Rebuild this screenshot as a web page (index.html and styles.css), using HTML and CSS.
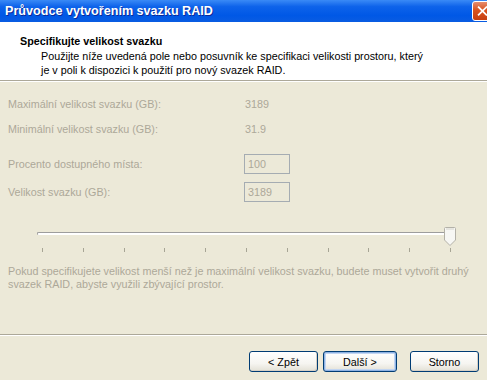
FILE: index.html
```html
<!DOCTYPE html>
<html lang="cs">
<head>
    <meta charset="UTF-8">
    <title>Průvodce vytvořením svazku RAID</title>
    <link rel="stylesheet" href="styles.css">
</head>
<body>
    <div class="window">
        <div class="titlebar">
            <span class="title">Průvodce vytvořením svazku RAID</span>
            <div class="close">
                <svg width="21" height="21" viewBox="0 0 21 21">
                    <path d="M6 6 L15 15 M15 6 L6 15" stroke="#fff" stroke-width="2" stroke-linecap="square"/>
                </svg>
            </div>
        </div>

        <div class="header">
            <div class="header-title">Specifikujte velikost svazku</div>
            <div class="header-desc">
                Použijte níže uvedená pole nebo posuvník ke specifikaci velikosti prostoru, který<br>
                je v poli k dispozici k použití pro nový svazek RAID.
            </div>
        </div>

        <div class="content">
            <div class="row">
                <span class="label">Maximální velikost svazku (GB):</span>
                <span class="value">3189</span>
            </div>
            <div class="row">
                <span class="label">Minimální velikost svazku (GB):</span>
                <span class="value">31.9</span>
            </div>
            <div class="row row-input">
                <span class="label">Procento dostupného místa:</span>
                <span class="field">100</span>
            </div>
            <div class="row row-input">
                <span class="label">Velikost svazku (GB):</span>
                <span class="field">3189</span>
            </div>

            <div class="slider">
                <div class="track"></div>
                <svg class="thumb" width="12" height="19" viewBox="0 0 12 19">
                    <path d="M1.5 0.5 H10.5 Q11.5 0.5 11.5 1.5 V13 L6 18.5 L0.5 13 V1.5 Q0.5 0.5 1.5 0.5 Z" fill="#f7f7f4" stroke="#b3b1a8"/>
                    <path d="M2 2 H10" stroke="#d6d4cc"/>
                </svg>
                <div class="ticks">
                    <i></i><i></i><i></i><i></i><i></i><i></i><i></i><i></i><i></i><i></i><i></i>
                </div>
            </div>

            <p class="note">
                Pokud specifikujete velikost menší než je maximální velikost svazku, budete muset vytvořit druhý<br>
                svazek RAID, abyste využili zbývající prostor.
            </p>
        </div>

        <div class="footer">
            <button class="btn">&lt; Zpět</button>
            <button class="btn btn-default">Další &gt;</button>
            <button class="btn btn-last">Storno</button>
        </div>
    </div>
</body>
</html>
```

FILE: styles.css
```css
body {
    margin: 0;
    padding: 0;
    background-color: #ece9d8;
    font-family: "Liberation Sans", Arial, sans-serif;
    font-size: 10.75px;
    color: #000;
}

.window {
    width: 487px;
    height: 380px;
    overflow: hidden;
    background-color: #ece9d8;
}

.titlebar {
    height: 22px;
    display: flex;
    align-items: center;
    justify-content: space-between;
    background: linear-gradient(to bottom, #3a8af6 0%, #0e63ea 30%, #0058e6 70%, #0a5ce2 100%);
    overflow: hidden;
}

.title {
    color: #fff;
    font-weight: bold;
    font-size: 12.6px;
    padding-left: 5px;
    text-shadow: 1px 1px 0 #0a2a9a;
}

.close {
    width: 21px;
    height: 20px;
    margin-right: -6px;
    margin-top: -1px;
    box-sizing: border-box;
    border: 1px solid #fff;
    border-radius: 3px;
    background: linear-gradient(to bottom, #e58d6f 0%, #d9531f 45%, #c63e10 100%);
    display: flex;
    align-items: center;
    justify-content: center;
}

.close svg {
    width: 19px;
    height: 18px;
}

.header {
    background-color: #fff;
    border-bottom: 1px solid #aca899;
    box-shadow: 0 1px 0 #fff;
    padding: 12px 0 0 20px;
    box-sizing: border-box;
    height: 59px;
}

.header-title {
    font-weight: bold;
    line-height: 14px;
}

.header-desc {
    padding-left: 21px;
    line-height: 14px;
    margin-top: 1px;
}

.content {
    padding: 10px 0 0 8px;
    color: #aca899;
}

.row {
    display: flex;
    align-items: center;
    height: 25px;
}

.row-input {
    height: 28px;
}

.row + .row-input {
    margin-top: 9px;
}

.row-input + .row-input {
    margin-top: 0;
}

.label {
    width: 237px;
}

.field {
    width: 46px;
    height: 20px;
    box-sizing: border-box;
    border: 1px solid #a5acb2;
    padding: 3px 0 0 3px;
    line-height: 13px;
    margin-left: -1px;
}

.slider {
    position: relative;
    margin: 26px 0 0 29px;
    width: 414px;
    height: 24px;
}

.track {
    height: 2px;
    border-top: 1px solid #9d9d9d;
    border-left: 1px solid #9d9d9d;
    background-color: #fff;
    border-radius: 2px;
    margin-top: 3px;
}

.thumb {
    position: absolute;
    left: 407px;
    top: -5px;
}

.ticks {
    display: flex;
    justify-content: space-between;
    margin: 13px 0 0 5px;
    width: 409px;
}

.ticks i {
    display: block;
    width: 1px;
    height: 4px;
    background-color: #a7a595;
}

.note {
    margin: 9px 0 0 0;
    line-height: 13px;
}

.footer {
    margin-top: 43px;
    border-top: 1px solid #aca899;
    box-shadow: inset 0 1px 0 #fff;
    display: flex;
    justify-content: flex-end;
    padding: 16px 8px 0 0;
}

.btn {
    font-family: "Liberation Sans", Arial, sans-serif;
    font-size: 10.75px;
    color: #000;
    width: 69px;
    height: 21px;
    padding: 0;
    border: 1px solid #003c74;
    border-radius: 3px;
    background: linear-gradient(to bottom, #ffffff 0%, #f6f5f1 60%, #e3e1d6 100%);
    box-shadow: inset -1px -1px 0 #d6d0c5;
    margin-left: 5px;
}

.btn-default {
    box-shadow: inset 0 0 0 1px #8db2e3, inset 0 0 0 2px #c2d5f1;
    width: 74px;
}

.btn-last {
    margin-left: 13px;
}
```
